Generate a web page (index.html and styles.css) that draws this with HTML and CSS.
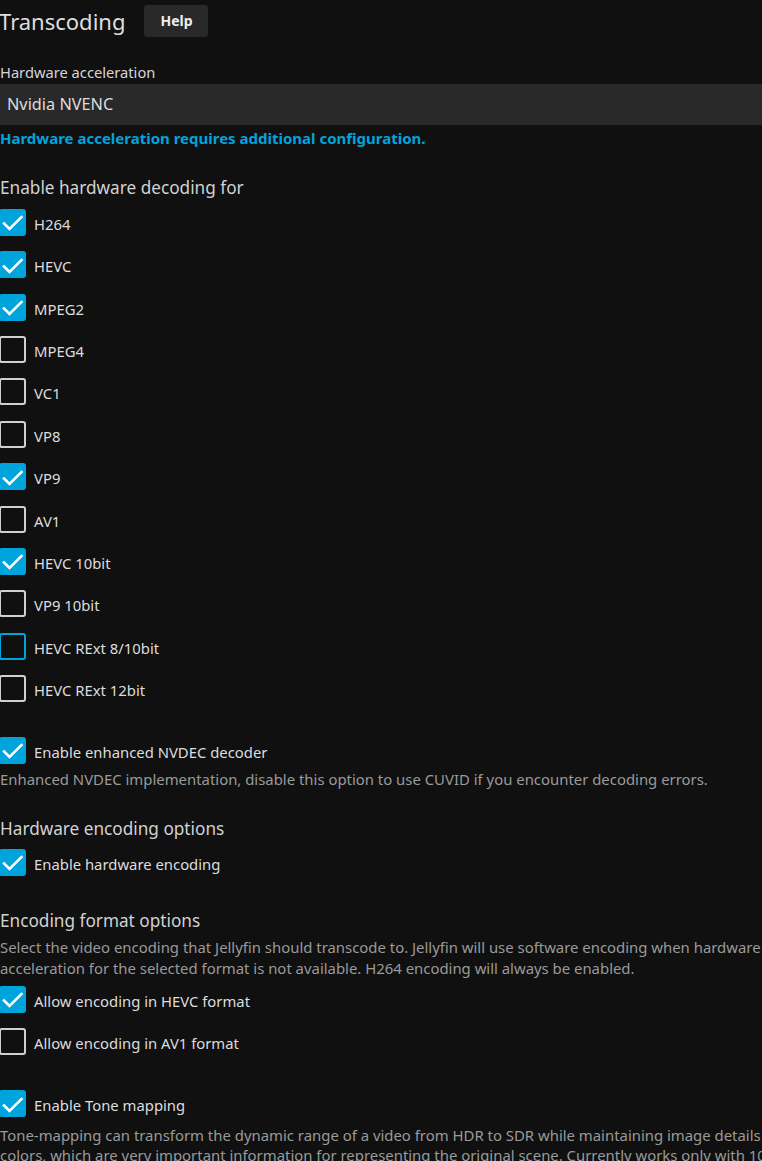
FILE: index.html
```html
<!DOCTYPE html>
<html lang="en">
<head>
<meta charset="utf-8">
<title>Transcoding</title>
<link rel="stylesheet" href="styles.css">
</head>
<body>
<div class="page">
  <div class="header">
    <h2 class="title">Transcoding</h2>
    <button class="help">Help</button>
  </div>

  <div class="field-label">Hardware acceleration</div>
  <div class="select">Nvidia NVENC</div>
  <div class="notice">Hardware acceleration requires additional configuration.</div>

  <h3 class="heading h-decoding">Enable hardware decoding for</h3>
  <div class="list">
    <div class="cb"><span class="box on"><svg viewBox="0 0 26 26"><polyline points="4,14.5 9.5,20 21.5,8"/></svg></span><span class="lbl">H264</span></div>
    <div class="cb"><span class="box on"><svg viewBox="0 0 26 26"><polyline points="4,14.5 9.5,20 21.5,8"/></svg></span><span class="lbl">HEVC</span></div>
    <div class="cb"><span class="box on"><svg viewBox="0 0 26 26"><polyline points="4,14.5 9.5,20 21.5,8"/></svg></span><span class="lbl">MPEG2</span></div>
    <div class="cb"><span class="box"></span><span class="lbl">MPEG4</span></div>
    <div class="cb"><span class="box"></span><span class="lbl">VC1</span></div>
    <div class="cb"><span class="box"></span><span class="lbl">VP8</span></div>
    <div class="cb"><span class="box on"><svg viewBox="0 0 26 26"><polyline points="4,14.5 9.5,20 21.5,8"/></svg></span><span class="lbl">VP9</span></div>
    <div class="cb"><span class="box"></span><span class="lbl">AV1</span></div>
    <div class="cb"><span class="box on"><svg viewBox="0 0 26 26"><polyline points="4,14.5 9.5,20 21.5,8"/></svg></span><span class="lbl">HEVC 10bit</span></div>
    <div class="cb"><span class="box"></span><span class="lbl">VP9 10bit</span></div>
    <div class="cb"><span class="box focus"></span><span class="lbl">HEVC RExt 8/10bit</span></div>
    <div class="cb last"><span class="box"></span><span class="lbl">HEVC RExt 12bit</span></div>
  </div>

  <div class="cb single nvdec"><span class="box on"><svg viewBox="0 0 26 26"><polyline points="4,14.5 9.5,20 21.5,8"/></svg></span><span class="lbl">Enable enhanced NVDEC decoder</span></div>
  <div class="desc">Enhanced NVDEC implementation, disable this option to use CUVID if you encounter decoding errors.</div>

  <h3 class="heading h-encoding">Hardware encoding options</h3>
  <div class="cb single hwenc"><span class="box on"><svg viewBox="0 0 26 26"><polyline points="4,14.5 9.5,20 21.5,8"/></svg></span><span class="lbl">Enable hardware encoding</span></div>

  <h3 class="heading h-format">Encoding format options</h3>
  <div class="desc desc-format">Select the video encoding that Jellyfin should transcode to. Jellyfin will use software encoding when hardware acceleration for the selected format is not available. H264 encoding will always be enabled.</div>
  <div class="list list-format">
    <div class="cb"><span class="box on"><svg viewBox="0 0 26 26"><polyline points="4,14.5 9.5,20 21.5,8"/></svg></span><span class="lbl">Allow encoding in HEVC format</span></div>
    <div class="cb last"><span class="box"></span><span class="lbl">Allow encoding in AV1 format</span></div>
  </div>

  <div class="cb single tone"><span class="box on"><svg viewBox="0 0 26 26"><polyline points="4,14.5 9.5,20 21.5,8"/></svg></span><span class="lbl">Enable Tone mapping</span></div>
  <div class="desc desc-tone">Tone-mapping can transform the dynamic range of a video from HDR to SDR while maintaining image details and colors, which are very important information for representing the original scene. Currently works only with 10bit HDR10, HLG and DoVi videos. This requires the corresponding GPGPU runtime.</div>
</div>
</body>
</html>
```

FILE: styles.css
```css
html, body {
  margin: 0;
  padding: 0;
  background: #101010;
  overflow: hidden;
}

body {
  font-family: "Noto Sans", "Open Sans", sans-serif;
  color: #dddddd;
}

.page {
  width: 800px;
  margin-left: -1px;
}

.header {
  display: flex;
  align-items: center;
  height: 42px;
}

.title {
  margin: 0;
  font-size: 22px;
  font-weight: 400;
  line-height: 42px;
  color: #dedede;
}

.help {
  margin-left: 19px;
  width: 64px;
  height: 32px;
  padding: 0;
  border: none;
  border-radius: 3px;
  background: #292929;
  color: #eeeeee;
  font-family: "Noto Sans", sans-serif;
  font-size: 14px;
  font-weight: 700;
  line-height: 32px;
  text-align: center;
}

.field-label {
  margin-top: 19.5px;
  padding-left: 1px;
  font-size: 14.7px;
  line-height: 20px;
  height: 22.5px;
  color: #d6d6d6;
}

.select {
  height: 41px;
  background: #292929;
  padding-left: 8px;
  font-size: 16.3px;
  line-height: 41px;
  color: #dddddd;
}

.notice {
  margin-top: 3.4px;
  padding-left: 1px;
  font-size: 15px;
  font-weight: 700;
  line-height: 20px;
  color: #00a4dc;
}

.heading {
  margin: 0;
  padding-left: 1px;
  font-size: 17.2px;
  font-weight: 400;
  line-height: 24px;
  color: #d2d2d2;
}

.h-decoding { margin-top: 27.5px; }
.h-encoding { margin-top: 28.2px; }
.h-format { margin-top: 28.2px; }

.list { margin-top: 9.1px; }

.cb {
  display: flex;
  align-items: flex-start;
  height: 42.36px;
}

.cb.last { height: 32px; }
.cb.single { height: 32px; }

.box {
  box-sizing: border-box;
  flex: none;
  width: 27px;
  height: 27px;
  border: 2px solid #d0d0d0;
  border-radius: 3px;
  display: flex;
  align-items: center;
  justify-content: center;
}

.box.on {
  background: #00a4dc;
  border-color: #00a4dc;
}

.box.focus {
  border-color: #00a4dc;
}

.box svg {
  width: 26px;
  height: 26px;
  flex: none;
}

.box polyline {
  fill: none;
  stroke: #ffffff;
  stroke-width: 2.6;
  stroke-linecap: square;
}

.lbl {
  margin-left: 8px;
  font-size: 14.85px;
  line-height: 30px;
  color: #dddddd;
  white-space: nowrap;
}

.nvdec { margin-top: 30px; }
.hwenc { margin-top: 7.8px; }
.tone { margin-top: 30px; }

.desc {
  padding-left: 1px;
  font-size: 14.9px;
  line-height: 20px;
  color: #9a9a9a;
}

.desc-format {
  margin-top: 4px;
  line-height: 20.5px;
}

.list-format { margin-top: 7.6px; }

.desc-tone {
  margin-top: 4px;
  line-height: 19.5px;
}
```
